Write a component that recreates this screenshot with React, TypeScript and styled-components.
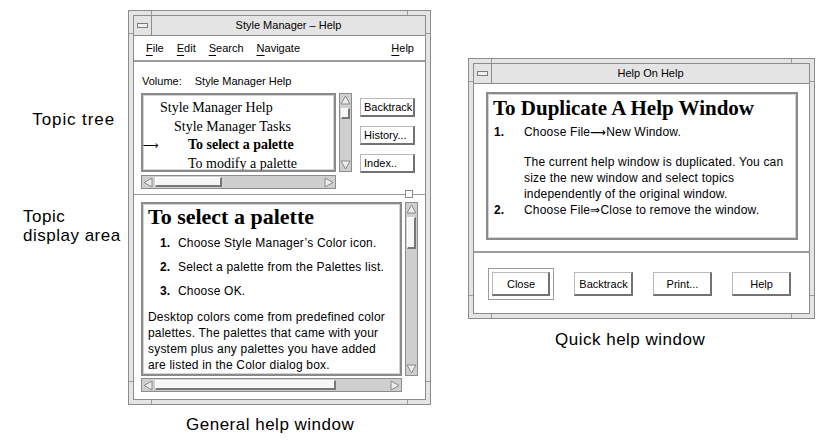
import styled, { createGlobalStyle } from "styled-components";

const GlobalStyle = createGlobalStyle`
  html, body {
    margin: 0;
    padding: 0;
    background: #ffffff;
  }
  body {
    width: 831px;
    height: 441px;
    overflow: hidden;
    font-family: "Liberation Sans", Arial, sans-serif;
    color: #000000;
  }
`;

const LINE = "#8c8c8c";

function TitleBar({ title }: { title: string }) {
  return (
    <TitleRow>
      <WindowMenuButton>
        <MenuGlyph />
      </WindowMenuButton>
      <TitleText>{title}</TitleText>
    </TitleRow>
  );
}

function UpArrow() {
  return (
    <ArrowSvg width="11" height="10" viewBox="0 0 11 10">
      <polygon points="5.5,1 10,9 1,9" fill="#ececec" stroke="#8a8a8a" />
    </ArrowSvg>
  );
}

function DownArrow() {
  return (
    <ArrowSvg width="11" height="10" viewBox="0 0 11 10">
      <polygon points="1,1 10,1 5.5,9" fill="#ececec" stroke="#8a8a8a" />
    </ArrowSvg>
  );
}

function LeftArrow() {
  return (
    <ArrowSvg width="10" height="11" viewBox="0 0 10 11">
      <polygon points="1,5.5 9,1 9,10" fill="#ececec" stroke="#8a8a8a" />
    </ArrowSvg>
  );
}

function RightArrow() {
  return (
    <ArrowSvg width="10" height="11" viewBox="0 0 10 11">
      <polygon points="1,1 9,5.5 1,10" fill="#ececec" stroke="#8a8a8a" />
    </ArrowSvg>
  );
}

function VScroll({ height, offset, size }: { height: number; offset: number; size: number }) {
  return (
    <VTrough $height={height}>
      <UpArrow />
      <VThumb $offset={offset} $size={size} />
      <Filler />
      <DownArrow />
    </VTrough>
  );
}

function HScroll({ width, offset, size }: { width: number; offset: number; size: number }) {
  return (
    <HTrough $width={width}>
      <LeftArrow />
      <HThumb $offset={offset} $size={size} />
      <Filler />
      <RightArrow />
    </HTrough>
  );
}

const topics = [
  { label: "Style Manager Help", level: 0, current: false },
  { label: "Style Manager Tasks", level: 1, current: false },
  { label: "To select a palette", level: 2, current: true },
  { label: "To modify a palette", level: 2, current: false },
];

export default function App() {
  return (
    <>
      <GlobalStyle />
      <Page>
        <Callouts>
          <TreeCallout>Topic tree</TreeCallout>
          <DisplayCallout>
            Topic
            <br />
            display area
          </DisplayCallout>
        </Callouts>

        <GeneralColumn>
          <Frame $width={303}>
            <Inner>
              <TitleBar title="Style Manager – Help" />
              <Client>
                <MenuBar>
                  <MenuItem><Mn>F</Mn>ile</MenuItem>
                  <MenuItem><Mn>E</Mn>dit</MenuItem>
                  <MenuItem><Mn>S</Mn>earch</MenuItem>
                  <MenuItem><Mn>N</Mn>avigate</MenuItem>
                  <HelpMenuItem><Mn>H</Mn>elp</HelpMenuItem>
                </MenuBar>

                <TopPane>
                  <VolumeRow>
                    <span>Volume:</span>
                    <span>Style Manager Help</span>
                  </VolumeRow>
                  <TreeRow>
                    <TreeColumn>
                      <ListBox>
                        {topics.map((t) => (
                          <TopicRow key={t.label}>
                            <Marker>{t.current ? "⟶" : ""}</Marker>
                            <TopicLabel $level={t.level} $current={t.current}>
                              {t.label}
                            </TopicLabel>
                          </TopicRow>
                        ))}
                      </ListBox>
                      <HScrollSpacer>
                        <HScroll width={195} offset={2} size={67} />
                      </HScrollSpacer>
                    </TreeColumn>
                    <TreeScrollWrap>
                      <VScroll height={79} offset={3} size={11} />
                    </TreeScrollWrap>
                    <ButtonColumn>
                      <PushButton $width={55} $height={19}>Backtrack</PushButton>
                      <PushButton $width={55} $height={19}>History...</PushButton>
                      <PushButton $width={55} $height={19}>Index..</PushButton>
                    </ButtonColumn>
                  </TreeRow>
                </TopPane>

                <SashRow>
                  <SashLine />
                  <SashHandle />
                  <SashTail />
                </SashRow>

                <BottomPane>
                  <TopicBox>
                    <TopicHeading>To select a palette</TopicHeading>
                    <StepList>
                      <Step>
                        <StepNum>1.</StepNum>
                        <span>Choose Style Manager’s Color icon.</span>
                      </Step>
                      <Step>
                        <StepNum>2.</StepNum>
                        <span>Select a palette from the Palettes list.</span>
                      </Step>
                      <Step>
                        <StepNum>3.</StepNum>
                        <span>Choose OK.</span>
                      </Step>
                    </StepList>
                    <Paragraph>
                      Desktop colors come from predefined color palettes. The palettes that came with your
                      system plus any palettes you have added are listed in the Color dialog box.
                    </Paragraph>
                  </TopicBox>
                  <DisplayScrollWrap>
                    <VScroll height={174} offset={3} size={32} />
                  </DisplayScrollWrap>
                  <BottomHScroll>
                    <HScroll width={261} offset={2} size={181} />
                  </BottomHScroll>
                </BottomPane>
              </Client>
            </Inner>
          </Frame>
          <GeneralCaption>General help window</GeneralCaption>
        </GeneralColumn>

        <QuickColumn>
          <Frame $width={347}>
            <Inner>
              <TitleBar title="Help On Help" />
              <QuickClient>
                <QuickBox>
                  <QuickHeading>To Duplicate A Help Window</QuickHeading>
                  <QuickStep>
                    <QuickNum>1.</QuickNum>
                    <div>
                      <QuickLine>
                        Choose File<MenuArrow>⟶</MenuArrow>New Window.
                      </QuickLine>
                      <QuickNote>
                        The current help window is duplicated. You can
                        <br />
                        size the new window and select topics
                        <br />
                        independently of the original window.
                      </QuickNote>
                    </div>
                  </QuickStep>
                  <QuickStep>
                    <QuickNum>2.</QuickNum>
                    <QuickLine>Choose File⇒Close to remove the window.</QuickLine>
                  </QuickStep>
                </QuickBox>
                <Separator />
                <ActionRow>
                  <DefaultRing>
                    <PushButton $width={58} $height={24} $center>Close</PushButton>
                  </DefaultRing>
                  <PushButton $width={59} $height={24} $center>Backtrack</PushButton>
                  <PushButton $width={59} $height={24} $center>Print...</PushButton>
                  <PushButton $width={59} $height={24} $center>Help</PushButton>
                </ActionRow>
              </QuickClient>
            </Inner>
          </Frame>
          <QuickCaption>Quick help window</QuickCaption>
        </QuickColumn>
      </Page>
    </>
  );
}

const Page = styled.div`
  display: flex;
  align-items: flex-start;
  width: 831px;
  height: 441px;
`;

const Callouts = styled.div`
  width: 128px;
  flex-shrink: 0;
  display: flex;
  flex-direction: column;
  font-size: 17px;
  letter-spacing: 0.5px;
  line-height: 19px;
`;

const TreeCallout = styled.div`
  margin-top: 110px;
  text-align: right;
  padding-right: 13px;
  letter-spacing: 0.9px;
`;

const DisplayCallout = styled.div`
  margin-top: 78px;
  padding-left: 23px;
`;

const GeneralColumn = styled.div`
  margin-top: 10px;
  display: flex;
  flex-direction: column;
`;

const QuickColumn = styled.div`
  margin-top: 58px;
  margin-left: 37px;
  display: flex;
  flex-direction: column;
`;

const Caption = styled.div`
  font-size: 17px;
  letter-spacing: 0.5px;
  line-height: 20px;
`;

const GeneralCaption = styled(Caption)`
  margin-top: 10px;
  padding-left: 58px;
`;

const QuickCaption = styled(Caption)`
  margin-top: 11px;
  padding-left: 87px;
`;

const Frame = styled.div<{ $width: number }>`
  width: ${(p) => p.$width}px;
  box-sizing: border-box;
  border: 1px solid ${LINE};
  padding: 4px;
  background:
    linear-gradient(#9c9c9c, #9c9c9c) left 22px top 0 / 1px 100% no-repeat,
    linear-gradient(#9c9c9c, #9c9c9c) right 22px top 0 / 1px 100% no-repeat,
    linear-gradient(#9c9c9c, #9c9c9c) left 0 top 22px / 100% 1px no-repeat,
    linear-gradient(#9c9c9c, #9c9c9c) left 0 bottom 22px / 100% 1px no-repeat,
    #e4e4e4;
`;

const Inner = styled.div`
  border: 1px solid ${LINE};
  display: flex;
  flex-direction: column;
  background: #ffffff;
`;

const TitleRow = styled.div`
  display: flex;
  height: 19px;
  border-bottom: 1px solid ${LINE};
  background: #e4e4e4;
`;

const WindowMenuButton = styled.div`
  width: 17px;
  border-right: 1px solid ${LINE};
  display: flex;
  align-items: center;
  justify-content: center;
`;

const MenuGlyph = styled.div`
  width: 9px;
  height: 3px;
  border: 1px solid #7c7c7c;
  background: #f0f0f0;
`;

const TitleText = styled.div`
  flex: 1;
  text-align: center;
  font-size: 11px;
  line-height: 19px;
`;

const Client = styled.div`
  display: flex;
  flex-direction: column;
`;

const MenuBar = styled.div`
  display: flex;
  align-items: center;
  height: 24px;
  padding: 0 11px 0 12px;
  gap: 13px;
  font-size: 11px;
  border-bottom: 2px solid #9c9c9c;
`;

const MenuItem = styled.span`
  line-height: 14px;
`;

const HelpMenuItem = styled(MenuItem)`
  margin-left: auto;
`;

const Mn = styled.span`
  text-decoration: underline;
  text-underline-offset: 3px;
`;

const TopPane = styled.div`
  display: flex;
  flex-direction: column;
  padding: 0 9px 0 7px;
`;

const VolumeRow = styled.div`
  display: flex;
  gap: 13px;
  margin-top: 12px;
  padding-left: 1px;
  font-size: 11px;
  line-height: 14px;
`;

const TreeRow = styled.div`
  display: flex;
  align-items: flex-start;
  margin-top: 5px;
`;

const TreeColumn = styled.div`
  display: flex;
  flex-direction: column;
`;

const ListBox = styled.div`
  width: 195px;
  height: 79px;
  box-sizing: border-box;
  border: 2px solid #8a8a8a;
  box-shadow: inset 0 0 0 1px #d4d4d4;
  padding-top: 4px;
  overflow: hidden;
`;

const TopicRow = styled.div`
  display: flex;
  align-items: baseline;
  height: 18.5px;
  line-height: 18.5px;
`;

const Marker = styled.span`
  width: 17px;
  flex-shrink: 0;
  font-family: "DejaVu Sans", "Liberation Sans", sans-serif;
  font-size: 11px;
`;

const TopicLabel = styled.span<{ $level: number; $current: boolean }>`
  margin-left: ${(p) => p.$level * 14}px;
  font-family: "Liberation Serif", "Times New Roman", serif;
  font-size: 14px;
  font-weight: ${(p) => (p.$current ? 700 : 400)};
  white-space: nowrap;
`;

const HScrollSpacer = styled.div`
  margin-top: 3px;
`;

const TreeScrollWrap = styled.div`
  margin-left: 3px;
`;

const ButtonColumn = styled.div`
  display: flex;
  flex-direction: column;
  gap: 9px;
  padding-top: 5px;
  margin-left: 8px;
`;

const PushButton = styled.button<{ $width: number; $height: number; $center?: boolean }>`
  width: ${(p) => p.$width}px;
  height: ${(p) => p.$height}px;
  box-sizing: border-box;
  margin: 0;
  padding: 0 2px 0 3px;
  background: #ffffff;
  border-style: solid;
  border-width: 1px 2px 2px 1px;
  border-color: #b8b8b8 #727272 #727272 #b8b8b8;
  font-family: "Liberation Sans", Arial, sans-serif;
  font-size: 11px;
  color: #000000;
  text-align: ${(p) => (p.$center ? "center" : "left")};
  white-space: nowrap;
  overflow: hidden;
`;

const SashRow = styled.div`
  display: flex;
  align-items: center;
  height: 8px;
  margin-top: 1px;
`;

const SashLine = styled.div`
  flex: 1;
  height: 1px;
  background: #9c9c9c;
`;

const SashTail = styled.div`
  width: 12px;
  height: 1px;
  background: #9c9c9c;
`;

const SashHandle = styled.div`
  width: 8px;
  height: 8px;
  box-sizing: border-box;
  border: 1px solid #8a8a8a;
  background: #ffffff;
`;

const BottomPane = styled.div`
  display: grid;
  grid-template-columns: 261px 13px;
  column-gap: 3px;
  row-gap: 2px;
  padding: 4px 6px 7px 7px;
`;

const TopicBox = styled.div`
  height: 174px;
  box-sizing: border-box;
  border: 2px solid #8a8a8a;
  box-shadow: inset 0 0 0 1px #d4d4d4;
  padding: 1px 4px 0 5px;
  overflow: hidden;
`;

const TopicHeading = styled.div`
  font-family: "Liberation Serif", "Times New Roman", serif;
  font-weight: 700;
  font-size: 22px;
  line-height: 24px;
  white-space: nowrap;
`;

const StepList = styled.div`
  display: flex;
  flex-direction: column;
  gap: 8px;
  margin-top: 6px;
`;

const Step = styled.div`
  display: flex;
  font-size: 12px;
  line-height: 16px;
  letter-spacing: 0.2px;
  white-space: nowrap;
`;

const StepNum = styled.span`
  width: 18px;
  margin-left: 12px;
  font-weight: 700;
`;

const Paragraph = styled.p`
  margin: 10px 0 0 0;
  font-size: 12px;
  line-height: 16px;
  letter-spacing: 0.2px;
`;

const DisplayScrollWrap = styled.div``;

const BottomHScroll = styled.div`
  grid-column: 1;
`;

const VTrough = styled.div<{ $height: number }>`
  width: 13px;
  height: ${(p) => p.$height}px;
  box-sizing: border-box;
  border: 1px solid ${LINE};
  background: #cfcfcf;
  display: flex;
  flex-direction: column;
  align-items: center;
  padding: 1px 0;
`;

const HTrough = styled.div<{ $width: number }>`
  width: ${(p) => p.$width}px;
  height: 14px;
  box-sizing: border-box;
  border: 1px solid ${LINE};
  background: #cfcfcf;
  display: flex;
  align-items: center;
  padding: 0 1px;
`;

const ArrowSvg = styled.svg`
  display: block;
  flex-shrink: 0;
`;

const VThumb = styled.div<{ $offset: number; $size: number }>`
  width: 9px;
  height: ${(p) => p.$size}px;
  margin-top: ${(p) => p.$offset}px;
  box-sizing: border-box;
  background: #f6f6f6;
  border-style: solid;
  border-width: 1px 2px 2px 1px;
  border-color: #ffffff #777777 #777777 #ffffff;
`;

const HThumb = styled.div<{ $offset: number; $size: number }>`
  height: 10px;
  width: ${(p) => p.$size}px;
  margin-left: ${(p) => p.$offset}px;
  box-sizing: border-box;
  background: #f6f6f6;
  border-style: solid;
  border-width: 1px 2px 2px 1px;
  border-color: #ffffff #777777 #777777 #ffffff;
`;

const Filler = styled.div`
  flex: 1;
`;

const QuickClient = styled.div`
  display: flex;
  flex-direction: column;
`;

const QuickBox = styled.div`
  height: 148px;
  margin: 8px 11px 0 12px;
  box-sizing: border-box;
  border: 2px solid #8a8a8a;
  box-shadow: inset 0 0 0 1px #d4d4d4;
  padding: 2px 4px 0 5px;
  overflow: hidden;
`;

const QuickHeading = styled(TopicHeading)`
  font-size: 21px;
  margin-bottom: 4px;
`;

const QuickStep = styled.div`
  display: flex;
  font-size: 12px;
  line-height: 16px;
  letter-spacing: 0.2px;
  white-space: nowrap;
`;

const QuickNum = styled.span`
  width: 30px;
  padding-left: 1px;
  flex-shrink: 0;
  font-weight: 700;
`;

const QuickLine = styled.div``;

const MenuArrow = styled.span`
  font-family: "DejaVu Sans", "Liberation Sans", sans-serif;
  font-weight: 700;
  font-size: 11px;
`;

const QuickNote = styled.div`
  margin-top: 12.5px;
`;

const Separator = styled.div`
  height: 2px;
  margin-top: 11px;
  background: #9c9c9c;
`;

const ActionRow = styled.div`
  display: flex;
  align-items: center;
  gap: 20px;
  padding: 15px 0 13px 14px;
`;

const DefaultRing = styled.div`
  border: 1px solid #9c9c9c;
  padding: 3px;
  display: flex;
`;
